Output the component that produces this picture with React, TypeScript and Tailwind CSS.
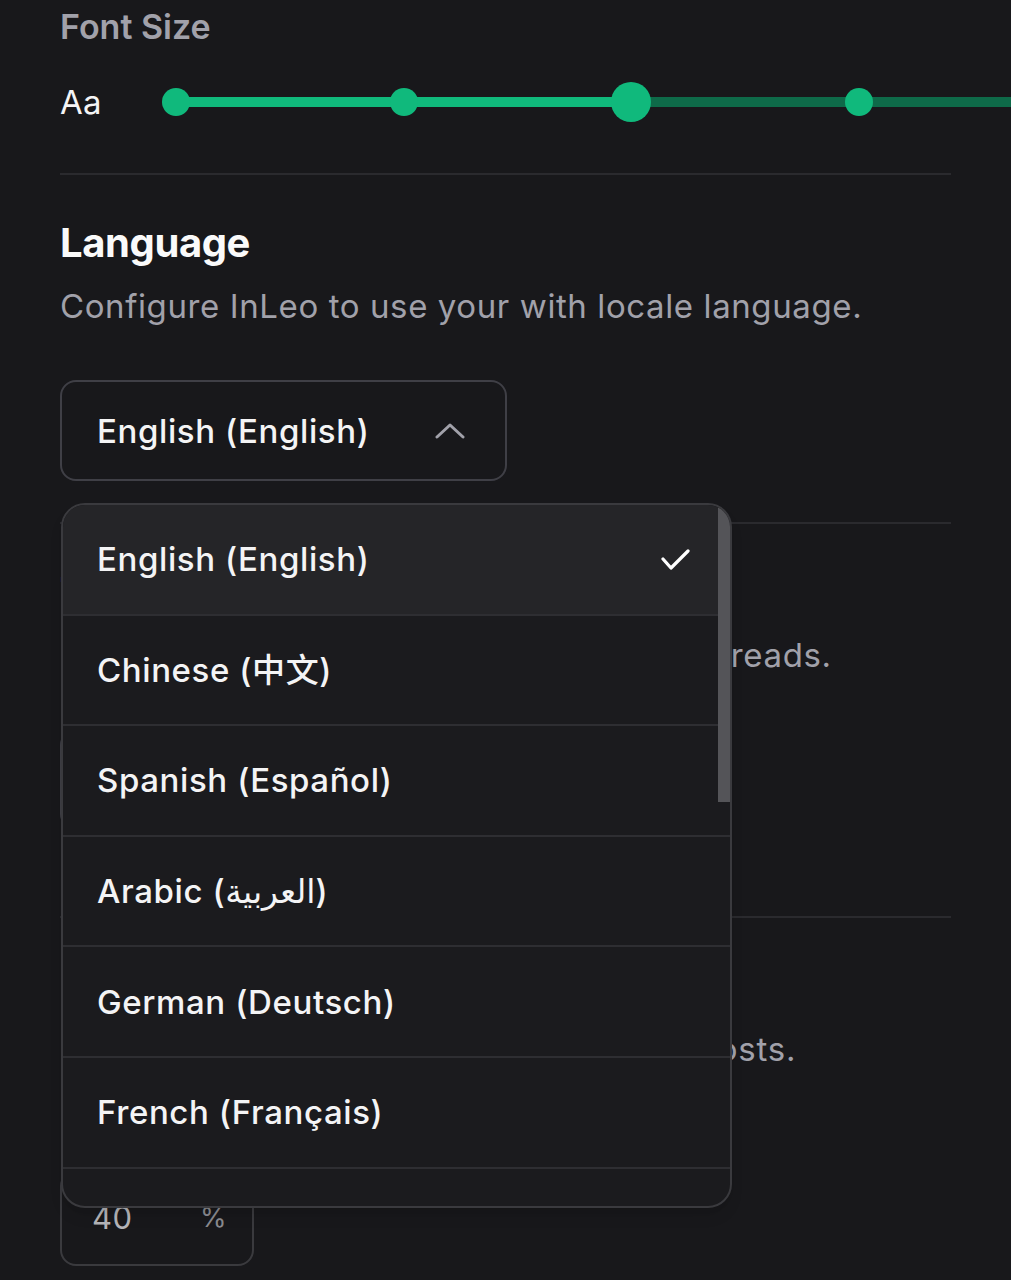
import React from "react";

const languages = [
  "English (English)",
  "Chinese (中文)",
  "Spanish (Español)",
  "Arabic (العربية)",
  "German (Deutsch)",
  "French (Français)",
  "Italian (Italiano)",
];

function Slider() {
  const steps = [0, 1, 2, 3, 4];
  const active = 2;
  return (
    <div className="relative h-[40px] w-[950px] shrink-0">
      <div className="absolute left-[20px] right-[20px] top-[15px] h-[10px] bg-[#0e6a49]" />
      <div className="absolute left-[20px] top-[15px] h-[10px] w-[455px] bg-[#10b97c]" />
      <div className="absolute inset-0 flex items-center justify-between">
        {steps.map((s) => (
          <div key={s} className="flex h-[40px] w-[40px] items-center justify-center">
            {s === active ? (
              <div className="h-[40px] w-[40px] rounded-full bg-[#10b97c]" />
            ) : (
              <div className="h-[28px] w-[28px] rounded-full bg-[#10b97c]" />
            )}
          </div>
        ))}
      </div>
    </div>
  );
}

export default function App() {
  return (
    <div className="relative h-[1280px] w-[1011px] overflow-hidden bg-[#18181b] font-['Inter','DejaVu_Sans','Noto_Sans_CJK_SC',sans-serif]">
      <div className="px-[60px]">
        {/* Font Size */}
        <div className="pt-[7px] text-[34px] font-semibold leading-[40px] text-[#a1a1aa]">Font Size</div>
        <div className="mt-[35px] flex items-center">
          <div className="w-[96px] shrink-0 text-[33px] leading-[40px] tracking-[0.3px] text-[#f4f4f5]">Aa</div>
          <Slider />
        </div>
        <div className="mt-[51px] h-[2px] bg-[#2a2a2e]" />

        {/* Language */}
        <div className="mt-[44px] text-[40px] font-bold leading-[48px] tracking-[-0.4px] text-[#fafafa]">Language</div>
        <div className="mt-[19px] text-[33px] leading-[40px] tracking-[0.6px] text-[#a1a1aa]">
          Configure InLeo to use your with locale language.
        </div>
        <div className="mt-[54px] flex h-[101px] w-[447px] items-center justify-between rounded-[16px] border-2 border-[#3f3f46] pl-[35px] pr-[40px]">
          <span className="text-[33px] font-medium leading-[40px] tracking-[0.6px] text-[#f4f4f5]">English (English)</span>
          <svg width="30" height="18" viewBox="0 0 30 18" fill="none">
            <polyline points="2,15 15,3 28,15" stroke="#a1a1aa" strokeWidth="3" strokeLinecap="round" strokeLinejoin="round" />
          </svg>
        </div>
        <div className="mt-[41px] h-[2px] bg-[#2a2a2e]" />

        {/* Threads (hidden behind dropdown) */}
        <div className="mt-[44px] text-[40px] font-bold leading-[48px] tracking-[-0.4px] text-[#fafafa]">Threads</div>
        <div className="mt-[19px] text-[33px] leading-[40px] tracking-[0.6px] text-[#a1a1aa]">
          Choose how all replies are displayed in threads.
        </div>
        <div className="mt-[54px] h-[101px] w-[447px] rounded-[16px] border-2 border-[#3f3f46]" />
        <div className="mt-[86px] h-[2px] bg-[#2a2a2e]" />

        {/* Payout */}
        <div className="mt-[44px] text-[40px] font-bold leading-[48px] tracking-[-0.4px] text-[#fafafa]">Payout</div>
        <div className="mt-[19px] text-[33px] leading-[40px] tracking-[0.78px] text-[#a1a1aa]">
          Set a default payout percentage for all posts.
        </div>
        <div className="mt-[101px] flex h-[96px] w-[194px] items-center rounded-[16px] border-2 border-[#3a3a3e] pl-[30px]">
          <span className="w-[108px] text-[31px] leading-[40px] tracking-[0.4px] text-[#b4b4b8]">40</span>
          <span className="text-[27px] leading-[40px] text-[#8a8a8f]">%</span>
        </div>
      </div>

      {/* Dropdown menu */}
      <div className="absolute left-[61px] top-[503px] h-[705px] w-[671px] overflow-hidden rounded-[24px] border-2 border-[#3a3a3e] bg-[#1b1b1e] shadow-lg">
        {languages.map((l, i) => (
          <div
            key={l}
            className={
              i === 0
                ? "flex h-[110.6px] items-center justify-between border-b-2 border-[#2e2e32] bg-[#252528] pl-[34px] pr-[40px]"
                : "flex h-[110.6px] items-center justify-between border-b-2 border-[#2e2e32] pl-[34px] pr-[40px]"
            }
          >
            <span className="text-[33px] font-medium leading-[40px] tracking-[0.6px] text-[#f4f4f5]">{l}</span>
            {i === 0 && (
              <svg width="30" height="24" viewBox="0 0 30 24" fill="none">
                <polyline points="3,12 11,21 28,4" stroke="#ffffff" strokeWidth="3.2" strokeLinecap="round" strokeLinejoin="round" />
              </svg>
            )}
          </div>
        ))}
        <div className="absolute right-0 top-0 h-[297px] w-[12px] bg-[#545458]" />
      </div>
    </div>
  );
}
